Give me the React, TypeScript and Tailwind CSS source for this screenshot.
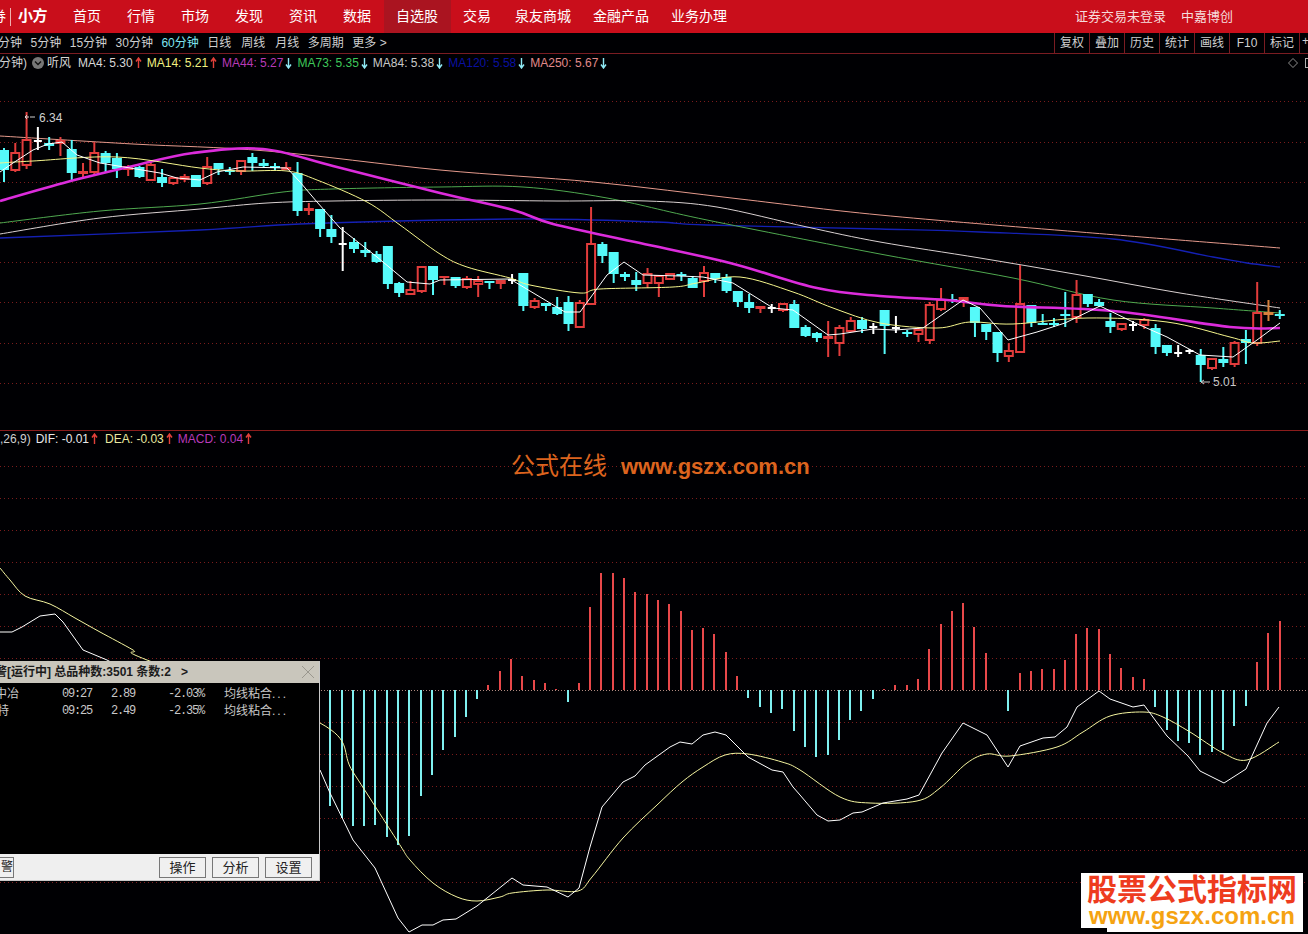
import React from "react";

const sans = "font-['Liberation_Sans','Noto_Sans_CJK_SC',sans-serif]";

type Candle = [string, number, number, number, number];

// kind, high, body top, body bottom, low (screen y). u red hollow, r red solid, d cyan, w white doji
const candles: Candle[] = [
  ["d", 148, 150, 170, 182], ["u", 143, 153, 170, 172], ["u", 112, 140, 165, 169], ["w", 127, 141, 142, 150],
  ["d", 137, 143, 146, 150], ["r", 137, 140, 144, 156], ["d", 140, 149, 173, 180], ["r", 163, 171, 174, 178],
  ["u", 142, 153, 172, 175], ["d", 151, 153, 163, 172], ["d", 153, 158, 169, 178], ["r", 165, 166, 170, 176],
  ["d", 166, 167, 177, 178], ["u", 162, 165, 180, 180], ["d", 169, 177, 183, 187], ["u", 178, 178, 183, 185],
  ["u", 174, 177, 179, 182], ["d", 175, 175, 187, 187], ["u", 157, 167, 183, 185], ["d", 163, 163, 169, 175],
  ["d", 167, 170, 172, 175], ["u", 161, 161, 171, 175], ["d", 153, 157, 163, 171], ["d", 159, 163, 166, 167],
  ["d", 163, 166, 168, 170], ["r", 162, 167, 170, 170], ["d", 162, 173, 211, 216], ["r", 203, 208, 211, 215],
  ["d", 209, 209, 229, 237], ["d", 215, 229, 237, 243], ["w", 227, 244, 245, 271], ["d", 238, 242, 249, 253],
  ["d", 242, 250, 253, 257], ["d", 251, 254, 262, 263], ["d", 246, 246, 284, 289], ["d", 282, 283, 293, 297],
  ["u", 281, 290, 294, 294], ["u", 267, 267, 291, 293], ["d", 266, 266, 280, 295], ["r", 276, 276, 278, 285],
  ["d", 277, 277, 286, 288], ["u", 276, 279, 287, 289], ["u", 276, 281, 284, 297], ["d", 281, 281, 283, 289],
  ["u", 281, 281, 283, 289], ["w", 274, 280, 281, 284], ["d", 273, 273, 306, 311], ["u", 298, 301, 307, 309],
  ["d", 303, 303, 306, 311], ["d", 297, 307, 314, 315], ["d", 296, 302, 324, 331], ["u", 300, 303, 327, 327],
  ["u", 207, 244, 304, 304], ["d", 242, 244, 256, 263], ["d", 252, 252, 274, 283], ["d", 272, 274, 277, 281],
  ["d", 272, 280, 285, 291], ["u", 268, 274, 283, 288], ["u", 276, 276, 283, 297], ["u", 274, 274, 279, 280],
  ["d", 272, 274, 276, 281], ["d", 276, 278, 288, 288], ["u", 266, 273, 281, 297], ["d", 273, 273, 279, 283],
  ["d", 274, 277, 291, 293], ["d", 291, 291, 302, 307], ["d", 294, 302, 308, 313], ["r", 306, 306, 309, 313],
  ["w", 304, 308, 309, 313], ["u", 304, 304, 310, 312], ["d", 300, 304, 328, 328], ["d", 325, 327, 336, 337],
  ["d", 332, 333, 338, 342], ["r", 321, 336, 339, 357], ["u", 325, 328, 343, 356], ["u", 317, 321, 331, 331],
  ["d", 317, 320, 329, 333], ["w", 323, 327, 328, 334], ["d", 310, 310, 326, 354], ["w", 316, 328, 329, 333],
  ["d", 330, 332, 334, 337], ["u", 327, 330, 334, 342], ["u", 302, 305, 340, 344], ["u", 288, 300, 309, 311],
  ["d", 294, 299, 301, 303], ["r", 297, 297, 302, 307], ["d", 307, 307, 323, 337], ["d", 324, 324, 332, 340],
  ["d", 332, 332, 353, 362], ["u", 343, 351, 356, 362], ["u", 265, 304, 352, 352], ["d", 305, 305, 323, 327],
  ["d", 314, 323, 324, 325], ["d", 318, 323, 325, 327], ["d", 292, 314, 316, 327], ["u", 280, 295, 317, 323],
  ["d", 294, 294, 304, 307], ["d", 299, 302, 306, 307], ["d", 313, 321, 327, 333], ["u", 324, 324, 329, 331],
  ["w", 321, 325, 326, 331], ["u", 318, 320, 325, 329], ["d", 324, 328, 347, 354], ["d", 345, 345, 353, 356],
  ["w", 345, 353, 354, 357], ["w", 349, 351, 352, 354], ["d", 349, 355, 365, 382], ["u", 359, 359, 368, 370],
  ["d", 347, 359, 363, 367], ["u", 341, 343, 364, 367], ["d", 330, 339, 343, 364], ["u", 282, 313, 343, 346],
  ["o", 300, 312, 315, 321], ["d", 310, 314, 315, 319],
];

const cx = (i: number) => 4 + i * 11.29;

// the moving averages are slow lines, so round the hand-read points off
const smooth = (pts: string) => {
  const p = pts.split(" ").map((s) => s.split(",").map(Number));
  let d = `M${p[0][0]} ${p[0][1]}`;
  for (let i = 0; i < p.length - 1; i++) {
    const a = p[Math.max(i - 1, 0)];
    const b = p[i];
    const c = p[i + 1];
    const e = p[Math.min(i + 2, p.length - 1)];
    const c1x = b[0] + (c[0] - a[0]) / 6;
    const c1y = b[1] + (c[1] - a[1]) / 6;
    const c2x = c[0] - (e[0] - b[0]) / 6;
    const c2y = c[1] - (e[1] - b[1]) / 6;
    d += `C${c1x} ${c1y} ${c2x} ${c2y} ${c[0]} ${c[1]}`;
  }
  return d;
};

const ma250 = "0,136 133,144 267,151 440,170 593,182 740,199 880,215 1080,232 1280,248";
const ma120 = "0,238 200,230 300,224 440,220 540,219 657,222 707,225 880,229 980,232 1113,239 1213,257 1247,263 1280,267";
const ma73 = "0,223 100,211 200,204 283,192 333,189 440,187 523,187 607,198 707,220 880,254 1013,278 1113,300 1213,308 1280,313";
const ma84 = "0,234 100,218 200,209 267,203 333,201 440,200 557,201 647,201 717,207 807,227 880,242 980,258 1080,275 1180,293 1280,308";
const ma44 = "0,201 67,182 133,166 193,153 263,149 333,166 440,193 513,210 553,224 640,243 730,263 817,288 880,296 947,300 1003,306 1113,311 1230,327 1280,328";
const ma14 = "0,163 33,161 117,157 200,168 240,171 287,171 317,180 367,202 400,225 440,254 467,267 510,278 530,285 580,293 600,289 673,287 697,283 740,277 793,292 833,308 880,323 937,328 970,322 1013,324 1087,318 1167,322 1230,337 1253,343 1280,341";
const ma4 = "0,172 13,163 33,150 48,144 62,142 77,155 100,163 160,173 177,178 200,180 217,172 243,167 287,168 300,182 317,202 340,228 377,257 407,282 430,284 440,280 510,279 540,297 565,312 580,312 607,275 624,262 643,275 680,276 703,277 733,283 773,308 793,310 828,335 840,334 873,329 895,330 923,328 963,300 980,308 1008,340 1037,332 1065,323 1100,306 1133,322 1167,337 1200,355 1233,357 1257,340 1280,323";

const dif = "0,632 12,632 22,627 40,616 55,614 63,622 83,650 107,660 320,770 330,793 353,840 375,868 398,918 409,932 422,925 433,925 443,920 456,919 477,906 512,878 523,885 547,887 568,897 579,888 590,847 602,807 623,782 635,776 645,765 670,747 680,742 692,744 703,735 715,732 726,735 748,757 772,770 783,772 793,787 800,795 817,815 828,821 840,820 853,813 862,812 883,803 907,799 919,795 942,753 963,723 987,735 1008,767 1020,746 1043,738 1055,737 1067,727 1077,707 1099,691 1110,699 1133,707 1144,705 1167,736 1188,756 1200,771 1224,783 1246,769 1267,723 1279,707";
const dea = "0,568 10,580 25,596 50,604 75,618 100,632 133,650 147,660 320,723 353,772 398,842 410,860 433,883 457,897 477,901 500,897 512,893 547,890 578,891 592,877 623,838 657,805 682,782 703,767 725,755 748,754 782,762 800,770 840,797 870,803 917,801 940,788 967,763 987,754 1010,756 1057,747 1083,732 1110,716 1143,712 1163,717 1190,732 1223,753 1247,760 1279,742";

// x, top or bottom end of the bar, measured from the zero line at y=690
const macdBars = [
  [330, 806], [342, 818], [353, 826], [364, 826], [375, 825], [387, 837], [398, 845], [409, 836], [421, 796], [432, 775],
  [443, 750], [455, 737], [466, 717], [477, 699], [488, 685], [500, 671], [511, 659], [522, 676], [534, 680], [545, 683],
  [556, 689], [568, 702], [579, 683], [590, 607], [601, 573], [613, 573], [624, 578], [635, 592], [647, 594], [658, 600],
  [669, 604], [681, 611], [692, 630], [703, 628], [714, 634], [726, 652], [737, 676], [748, 698], [760, 707], [771, 713],
  [782, 709], [794, 731], [805, 747], [816, 757], [828, 755], [839, 740], [850, 720], [861, 711], [873, 699], [884, 689],
  [895, 685], [907, 685], [918, 679], [929, 649], [941, 624], [952, 611], [963, 603], [974, 627], [986, 653], [1008, 711],
  [1020, 673], [1031, 671], [1042, 669], [1054, 669], [1065, 660], [1076, 634], [1087, 628], [1099, 629], [1110, 654],
  [1121, 668], [1133, 677], [1144, 679], [1155, 707], [1167, 730], [1178, 741], [1189, 743], [1200, 755], [1212, 752],
  [1223, 750], [1234, 726], [1246, 706], [1257, 662], [1268, 633], [1280, 621],
];

const mainGrid = [101, 142, 182, 222, 262, 302, 343, 383];
const macdGrid = [466, 498, 530, 562, 594, 626, 658, 722, 754, 786, 818, 850, 882];

const navItems = [
  { label: "首页", cls: "px-[13px]" },
  { label: "行情", cls: "px-[13px]" },
  { label: "市场", cls: "px-[13px]" },
  { label: "发现", cls: "px-[13px]" },
  { label: "资讯", cls: "px-[13px]" },
  { label: "数据", cls: "px-[13px]" },
  { label: "自选股", cls: "pl-3 pr-[13px] bg-[#aa1420]" },
  { label: "交易", cls: "px-3" },
  { label: "泉友商城", cls: "px-3" },
  { label: "金融产品", cls: "px-2.5" },
  { label: "业务办理", cls: "px-3" },
];

const periods = ["分钟", "5分钟", "15分钟", "30分钟", "60分钟", "日线", "周线", "月线", "多周期"];
const tools = ["复权", "叠加", "历史", "统计", "画线", "F10", "标记"];

const Arrow = ({ up }: { up: boolean }) => (
  <svg width="7" height="12" viewBox="0 0 7 12" className="ml-[2px] shrink-0">
    {up ? (
      <path d="M3.5 11V1.5M1 4.5 3.5 1 6 4.5" fill="none" stroke="#e2403a" strokeWidth="1.4" />
    ) : (
      <path d="M3.5 1v9.5M1 7.5 3.5 11 6 7.5" fill="none" stroke="#8feaf5" strokeWidth="1.4" />
    )}
  </svg>
);

const Legend = ({ text, color, up }: { text: string; color: string; up: boolean }) => (
  <div className="flex items-center">
    <span className={`text-xs ${color}`}>{text}</span>
    <Arrow up={up} />
  </div>
);

const MainChart = () => (
  <svg viewBox="0 54 1308 376" width="1308" height="376" className="block">
    {mainGrid.map((y) => (
      <line key={y} x1="0" x2="1308" y1={y + 0.5} y2={y + 0.5} stroke="#7a1c1c" strokeDasharray="1 3" />
    ))}
    <path d={smooth(ma250)} fill="none" stroke="#e59a8c" strokeWidth="1" />
    <path d={smooth(ma120)} fill="none" stroke="#1420b4" strokeWidth="1.3" />
    <path d={smooth(ma73)} fill="none" stroke="#4fa84f" strokeWidth="1" />
    <path d={smooth(ma84)} fill="none" stroke="#d8d0d0" strokeWidth="1" />
    {candles.map(([kind, high, top, bottom, low], i) => {
      const x = cx(i);
      const color = kind === "d" ? "#55fafa" : kind === "w" ? "#ffffff" : kind === "o" ? "#d8803c" : "#e23c3c";
      if (kind === "w") {
        return (
          <g key={i} stroke={color} strokeWidth="2">
            <line x1={x} x2={x} y1={high} y2={low} />
            <line x1={x - 4} x2={x + 4} y1={top} y2={top} />
          </g>
        );
      }
      if (kind === "u") {
        return (
          <g key={i} stroke={color} strokeWidth="2" fill="#000">
            <line x1={x} x2={x} y1={high} y2={top} />
            <line x1={x} x2={x} y1={bottom} y2={low} />
            <rect x={x - 4} y={top} width="8" height={bottom - top} />
          </g>
        );
      }
      return (
        <g key={i} fill={color}>
          <rect x={x - 1} y={high} width="2" height={low - high} />
          <rect x={x - 5} y={top} width="10" height={Math.max(bottom - top, 2)} />
        </g>
      );
    })}
    <path d={smooth(ma44)} fill="none" stroke="#dc2cdc" strokeWidth="2.6" />
    <path d={smooth(ma14)} fill="none" stroke="#f5f58c" strokeWidth="1" />
    <polyline points={ma4} fill="none" stroke="#ffffff" strokeWidth="1" />
    <path d="M25 117h4M25 117l2-2M25 117l2 2M30 117h5" fill="none" stroke="#d0d0d0" strokeWidth="1" />
    <text x="39" y="122" fontSize="12" fill="#d0d0d0" fontFamily="Liberation Sans">6.34</text>
    <path d="M1201 382h9M1201 382l3-2M1201 382l3 2" fill="none" stroke="#c8c8c8" strokeWidth="1" />
    <text x="1213" y="386" fontSize="12" fill="#c8c8c8" fontFamily="Liberation Sans">5.01</text>
  </svg>
);

const MacdChart = () => (
  <svg viewBox="0 431 1308 503" width="1308" height="503" className="block">
    {macdGrid.map((y) => (
      <line key={y} x1="0" x2="1308" y1={y + 0.5} y2={y + 0.5} stroke="#7a1c1c" strokeDasharray="1 3" />
    ))}
    <line x1="0" x2="1308" y1="690.5" y2="690.5" stroke="#b08a80" strokeDasharray="1 2" />
    {macdBars.map(([x, end]) => (
      <rect
        key={x}
        x={x - 1}
        y={Math.min(end, 690)}
        width="2"
        height={Math.abs(end - 690)}
        fill={end < 690 ? "#e8484a" : "#7ff0f0"}
      />
    ))}
    <path d={smooth(dea)} fill="none" stroke="#f5f5a0" strokeWidth="1" />
    <polyline points={dif} fill="none" stroke="#ffffff" strokeWidth="1" />
  </svg>
);

const AlertWindow = () => (
  <div className={`absolute left-0 top-[230px] flex h-[220px] w-[320px] flex-col overflow-hidden border-r border-b border-[#c8c8c8] bg-black ${sans}`}>
    <div className="flex h-[22px] shrink-0 items-center justify-between bg-[#c9c6bc] pr-1">
      <span className="-ml-[5px] whitespace-pre text-xs font-bold text-[#1c1c1c]">警[运行中] 总品种数:3501 条数:2   &gt;</span>
      <svg width="14" height="14" viewBox="0 0 14 14">
        <path d="M1 1l12 12M13 1 1 13" stroke="#9a978e" strokeWidth="1" />
      </svg>
    </div>
    <div className="flex flex-1 flex-col gap-[5px] pt-[5px] text-xs leading-[12px] text-[#c8c8c8]">
      {[
        ["中冶", "09:27", "2.89", "-2.03%"],
        ["特", "09:25", "2.49", "-2.35%"],
      ].map(([name, time, price, pct], i) => (
        <div key={time} className="flex h-[12px] items-center whitespace-pre">
          <span className={`${i === 0 ? "-ml-[5px] w-[67px]" : "-ml-[3px] w-[65px]"} shrink-0`}>{name}</span>
          <span className="w-[49px] shrink-0 font-['Liberation_Mono'] text-xs tracking-[-1.2px]">{time}</span>
          <span className="w-[57px] shrink-0 font-['Liberation_Mono'] text-xs tracking-[-1.2px]">{price}</span>
          <span className="w-[56px] shrink-0 font-['Liberation_Mono'] text-xs tracking-[-1.2px]">{pct}</span>
          <span>均线粘合<span className="tracking-[2px]">...</span></span>
        </div>
      ))}
    </div>
    <div className="flex h-[26px] shrink-0 items-center justify-between bg-[#efefef] pr-[7px]">
      <button className="-ml-[8px] h-[21px] w-[22px] border border-[#777] bg-[#f0f0f0] text-right text-xs text-[#222]">警</button>
      <div className="flex gap-[6px]">
        {["操作", "分析", "设置"].map((b) => (
          <button key={b} className="h-[21px] w-[47px] border border-[#777] bg-[#f0f0f0] text-[13px] text-[#222]">
            {b}
          </button>
        ))}
      </div>
    </div>
  </div>
);

export default function App() {
  return (
    <div className={`relative flex h-[934px] w-[1308px] flex-col overflow-hidden bg-[#000003] ${sans}`}>
      <header className="flex h-[33px] shrink-0 items-stretch bg-[#c90e1b] text-white">
        <div className="flex w-[60px] items-center overflow-hidden">
          <span className="-ml-[8px] text-[14px] text-white">券</span>
          <span className="ml-[4px] h-[18px] w-px bg-[#f0b0b0]" />
          <span className="ml-[7px] text-[15px] font-bold tracking-[-0.5px]">小方</span>
        </div>
        <nav className="flex items-stretch text-[14px]">
          {navItems.map((n) => (
            <div key={n.label} className={`flex items-center ${n.cls}`}>
              {n.label}
            </div>
          ))}
        </nav>
        <div className="ml-auto flex items-center gap-[15px] pr-[75px] text-[13px] text-[#f6dcdc]">
          <span>证券交易未登录</span>
          <span>中嘉博创</span>
        </div>
      </header>

      <div className="flex h-[21px] shrink-0 items-center justify-between border-b border-[#7a1c22] text-xs text-[#cfcfcf]">
        <div className="flex items-center gap-[8.5px]">
          {periods.map((p, i) => (
            <span
              key={p}
              className={`${i === 0 ? "-ml-0.5" : ""} ${p === "60分钟" ? "text-[#7fe4f0]" : ""} ${p === "日线" || p === "周线" ? "mr-[1.5px]" : ""}`}
            >
              {p}
            </span>
          ))}
          <span>更多 &gt;</span>
        </div>
        <div className="flex h-full items-stretch">
          {tools.map((t) => (
            <div key={t} className="flex w-[35px] items-center justify-center border-l border-[#7a1c22]">
              {t}
            </div>
          ))}
          <div className="w-[9px] overflow-hidden border-l border-[#7a1c22] pl-[2px]">+</div>
        </div>
      </div>

      <section className="relative h-[377px] shrink-0 border-b border-[#8a1c1c]">
        <MainChart />
        <div className="absolute left-0 right-0 top-0 flex h-[18px] items-center">
          <span className="-ml-[1px] text-xs text-[#cfcfcf]">分钟)</span>
          <span className="ml-[5px] flex h-[12px] w-[12px] items-center justify-center rounded-full bg-[#777]">
            <svg width="8" height="8" viewBox="0 0 8 8">
              <path d="M1 2.5 4 5.5 7 2.5" fill="none" stroke="#111" strokeWidth="1.4" />
            </svg>
          </span>
          <span className="ml-[3px] mr-[7px] text-xs text-[#d8d8d8]">听风</span>
          <div className="flex items-center gap-[5px]">
            <Legend text="MA4: 5.30" color="text-[#d8d8d8]" up />
            <Legend text="MA14: 5.21" color="text-[#f0f080]" up />
            <Legend text="MA44: 5.27" color="text-[#b83ab8]" up={false} />
            <Legend text="MA73: 5.35" color="text-[#3fc85a]" up={false} />
            <Legend text="MA84: 5.38" color="text-[#c8c8c8]" up={false} />
            <Legend text="MA120: 5.58" color="text-[#0a10a0]" up={false} />
            <Legend text="MA250: 5.67" color="text-[#e08a8a]" up={false} />
          </div>
          <div className="ml-auto flex items-center gap-[7px] text-[#b0b0b0]">
            <svg width="10" height="10" viewBox="0 0 10 10">
              <path d="M5 .5 9.5 5 5 9.5 .5 5z" fill="none" stroke="#b0b0b0" strokeWidth="0.8" />
            </svg>
            <span className="h-[10px] w-[3px] border-y border-l border-[#b0b0b0]" />
          </div>
        </div>
      </section>

      <section className="relative flex-1">
        <MacdChart />
        <div className="absolute left-0 top-0 flex h-[15px] items-center gap-[5px]">
          <div className="mr-[2px] flex items-center">
            <span className="mr-[5px] text-xs text-[#cfcfcf]">,26,9)</span>
            <Legend text="DIF: -0.01" color="text-[#e8e8e8]" up />
          </div>
          <Legend text="DEA: -0.03" color="text-[#e8e8a0]" up />
          <Legend text="MACD: 0.04" color="text-[#b83ab8]" up />
        </div>
        <div className="absolute left-[511px] top-[17px] flex items-center gap-[14px] whitespace-nowrap text-[#dc641e]">
          <span className="text-[24px]">公式在线</span>
          <span className="text-[22px] font-bold">www.gszx.com.cn</span>
        </div>
        <AlertWindow />
      </section>

      <div className="absolute left-[1107px] top-[900px] h-[32px] w-[196px] bg-white" />
      <div className="absolute left-[1081px] top-[873px] flex h-[55px] w-[222px] flex-col items-center bg-white">
        <span className="text-[30px] font-bold leading-[33px] text-[#ee3c1e]">股票公式指标网</span>
        <span className="-mt-[1px] text-2xl font-bold leading-[21px] text-[#f5a312]">www.gszx.com.cn</span>
      </div>
    </div>
  );
}
